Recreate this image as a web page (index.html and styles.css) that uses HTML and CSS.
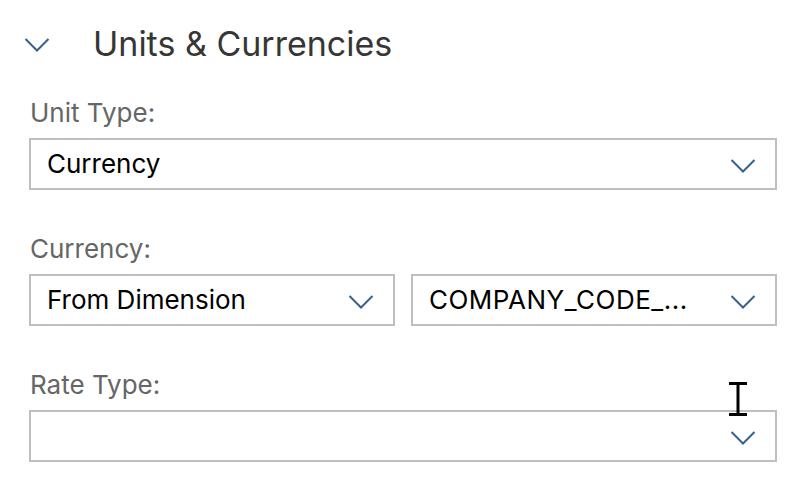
FILE: index.html
```html
<!DOCTYPE html>
<html lang="en">
<head>
<meta charset="utf-8">
<title>Units &amp; Currencies</title>
<link rel="stylesheet" href="styles.css">
</head>
<body>
<section class="panel">
  <header class="panel-header">
    <svg class="chevron header-chevron" viewBox="0 0 26 16" width="26" height="16" aria-hidden="true"><polyline points="1.5,2 13,13.5 24.5,2"/></svg>
    <h2 class="panel-title">Units &amp; Currencies</h2>
  </header>

  <div class="field">
    <label class="field-label">Unit Type:</label>
    <div class="select">
      <span class="select-value">Currency</span>
      <svg class="chevron select-chevron" viewBox="0 0 26 16" width="26" height="16" aria-hidden="true"><polyline points="1.5,2 13,13.5 24.5,2"/></svg>
    </div>
  </div>

  <div class="field">
    <label class="field-label">Currency:</label>
    <div class="select-row">
      <div class="select">
        <span class="select-value">From Dimension</span>
        <svg class="chevron select-chevron" viewBox="0 0 26 16" width="26" height="16" aria-hidden="true"><polyline points="1.5,2 13,13.5 24.5,2"/></svg>
      </div>
      <div class="select">
        <span class="select-value select-value-code">COMPANY_CODE_...</span>
        <svg class="chevron select-chevron" viewBox="0 0 26 16" width="26" height="16" aria-hidden="true"><polyline points="1.5,2 13,13.5 24.5,2"/></svg>
      </div>
    </div>
  </div>

  <div class="field">
    <label class="field-label">Rate Type:</label>
    <div class="select">
      <span class="select-value"></span>
      <svg class="chevron select-chevron" viewBox="0 0 26 16" width="26" height="16" aria-hidden="true"><polyline points="1.5,2 13,13.5 24.5,2"/></svg>
    </div>
  </div>

  <svg class="text-cursor" viewBox="0 0 20 34" width="20" height="34" aria-hidden="true">
    <path d="M1 1.5H19M10 1.5V32.5M1 32.5H19"/>
  </svg>
</section>
</body>
</html>
```
FILE: styles.css
```css
* {
  box-sizing: border-box;
}

html, body {
  margin: 0;
  padding: 0;
  background: #ffffff;
}

body {
  font-family: Inter, Roboto, "Liberation Sans", Arial, sans-serif;
  color: #000000;
}

.panel {
  position: relative;
  padding: 24px 30px 0 29px;
}

.panel-header {
  display: flex;
  align-items: center;
  height: 40px;
  margin-left: -5px;
}

.chevron {
  fill: none;
  stroke: #35628c;
  stroke-width: 2;
  stroke-linecap: butt;
  stroke-linejoin: miter;
  flex: none;
}

.header-chevron {
  margin-top: 1px;
}

.panel-title {
  margin: 0 0 0 43px;
  font-size: 34px;
  line-height: 40px;
  font-weight: 400;
  color: #363636;
}

.field {
  margin-top: 44px;
}

.panel-header + .field {
  margin-top: 34px;
}

.field-label {
  display: block;
  font-size: 26px;
  line-height: 30px;
  color: #666666;
  margin-bottom: 10px;
  padding-left: 1px;
}

.select-row {
  display: grid;
  grid-template-columns: 1fr 1fr;
  gap: 16px;
}

.select {
  display: flex;
  align-items: center;
  height: 52px;
  border: 2px solid #bfbfbf;
  background: #ffffff;
  padding: 0 19px 0 16px;
}

.select-value {
  flex: 1;
  min-width: 0;
  font-size: 26px;
  line-height: 30px;
  color: #000000;
  white-space: nowrap;
  overflow: hidden;
  text-overflow: ellipsis;
}

.select-value-code {
  letter-spacing: 0.5px;
}

.select-chevron {
  margin-top: 3px;
}

.text-cursor {
  position: absolute;
  left: 728px;
  top: 382px;
  fill: none;
  stroke: #000000;
  stroke-width: 3;
}
```
